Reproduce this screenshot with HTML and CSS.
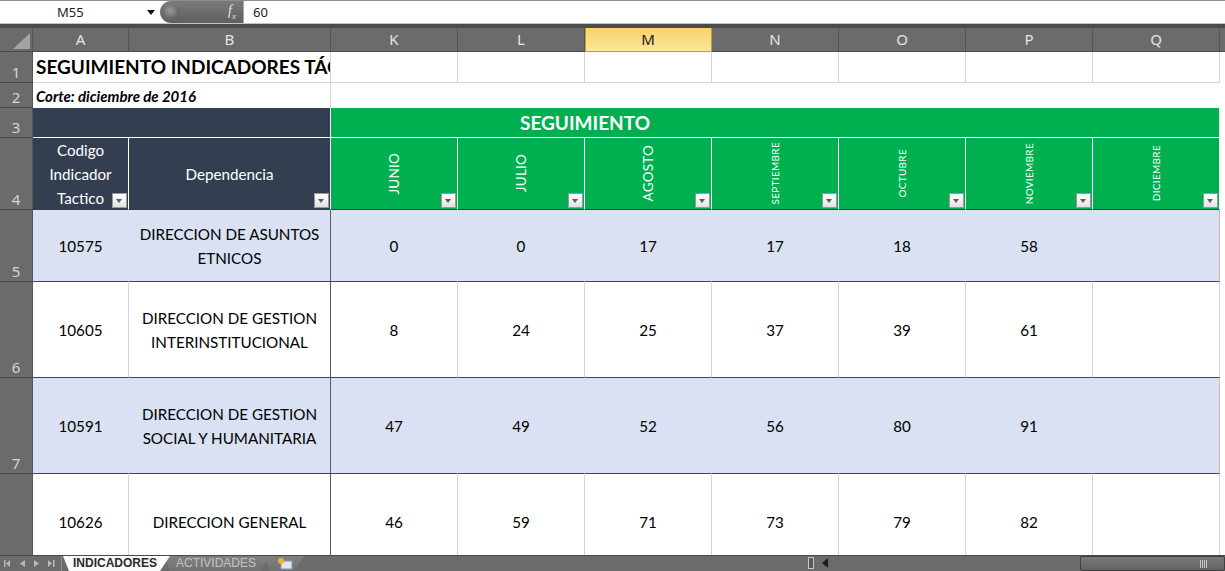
FILE: index.html
```html
<!DOCTYPE html>
<html lang="es">
<head>
<meta charset="UTF-8">
<title>INDICADORES</title>
<link rel="stylesheet" href="styles.css">
</head>
<body>

<div class="formula-bar">
  <div class="name-box">
    <span class="name">M55</span>
    <span class="caret"></span>
  </div>
  <div class="fx-pill">
    <span class="knob"></span>
    <span class="fx">f<sub>x</sub></span>
  </div>
  <div class="formula-input">60</div>
</div>
<div class="band"></div>

<div class="sheet">
  <!-- column headers -->
  <div class="corner">
    <svg width="33" height="24" viewBox="0 0 33 24"><polygon points="30,5 30,21 13,21" fill="#a3a3a3"/></svg>
  </div>
  <div class="ch">A</div>
  <div class="ch">B</div>
  <div class="ch">K</div>
  <div class="ch">L</div>
  <div class="ch sel">M</div>
  <div class="ch">N</div>
  <div class="ch">O</div>
  <div class="ch">P</div>
  <div class="ch">Q</div>
  <div class="ch end"></div>

  <!-- row 1 -->
  <div class="rh">1</div>
  <div class="c title span2">SEGUIMIENTO INDICADORES TÁCTICOS 2016</div>
  <div class="c"></div><div class="c"></div><div class="c"></div><div class="c"></div>
  <div class="c"></div><div class="c"></div><div class="c"></div>

  <!-- row 2 -->
  <div class="rh">2</div>
  <div class="c subtitle span2">Corte: diciembre de 2016</div>
  <div class="c blank span7"></div>

  <!-- row 3 -->
  <div class="rh">3</div>
  <div class="c navy span2"></div>
  <div class="c green group span4">SEGUIMIENTO</div>
  <div class="c green group-end span3"></div>

  <!-- row 4 -->
  <div class="rh">4</div>
  <div class="c navy head">Codigo<br>Indicador<br>Tactico<span class="filter"></span></div>
  <div class="c navy head dark-edge">Dependencia<span class="filter"></span></div>
  <div class="c green head"><span class="month">JUNIO</span><span class="filter"></span></div>
  <div class="c green head"><span class="month">JULIO</span><span class="filter"></span></div>
  <div class="c green head"><span class="month">AGOSTO</span><span class="filter"></span></div>
  <div class="c green head"><span class="month small">SEPTIEMBRE</span><span class="filter"></span></div>
  <div class="c green head"><span class="month small">OCTUBRE</span><span class="filter"></span></div>
  <div class="c green head"><span class="month small">NOVIEMBRE</span><span class="filter"></span></div>
  <div class="c green head"><span class="month small">DICIEMBRE</span><span class="filter"></span></div>

  <!-- row 5 -->
  <div class="rh">5</div>
  <div class="c row shade">10575</div>
  <div class="c row shade dep">DIRECCION DE ASUNTOS<br>ETNICOS</div>
  <div class="c row shade">0</div>
  <div class="c row shade">0</div>
  <div class="c row shade">17</div>
  <div class="c row shade">17</div>
  <div class="c row shade">18</div>
  <div class="c row shade">58</div>
  <div class="c row shade last"></div>

  <!-- row 6 -->
  <div class="rh">6</div>
  <div class="c row">10605</div>
  <div class="c row dep">DIRECCION DE GESTION<br>INTERINSTITUCIONAL</div>
  <div class="c row">8</div>
  <div class="c row">24</div>
  <div class="c row">25</div>
  <div class="c row">37</div>
  <div class="c row">39</div>
  <div class="c row">61</div>
  <div class="c row"></div>

  <!-- row 7 -->
  <div class="rh">7</div>
  <div class="c row shade">10591</div>
  <div class="c row shade dep">DIRECCION DE GESTION<br>SOCIAL Y HUMANITARIA</div>
  <div class="c row shade">47</div>
  <div class="c row shade">49</div>
  <div class="c row shade">52</div>
  <div class="c row shade">56</div>
  <div class="c row shade">80</div>
  <div class="c row shade">91</div>
  <div class="c row shade last"></div>

  <!-- row 8 -->
  <div class="rh">8</div>
  <div class="c row">10626</div>
  <div class="c row dep">DIRECCION GENERAL</div>
  <div class="c row">46</div>
  <div class="c row">59</div>
  <div class="c row">71</div>
  <div class="c row">73</div>
  <div class="c row">79</div>
  <div class="c row">82</div>
  <div class="c row"></div>
</div>

<div class="tabs">
  <div class="nav">
    <svg width="60" height="15" viewBox="0 0 60 15">
      <g fill="#b9b9b9">
        <rect x="4" y="4" width="1.5" height="7"/>
        <polygon points="10,4 10,11 6,7.5"/>
        <polygon points="25,4 25,11 20,7.5"/>
        <polygon points="34,4 34,11 39,7.5"/>
        <polygon points="48,4 48,11 52,7.5"/>
        <rect x="53" y="4" width="1.5" height="7"/>
      </g>
    </svg>
  </div>
  <div class="tab active">INDICADORES</div>
  <div class="tab">ACTIVIDADES</div>
  <div class="tab new">
    <svg width="18" height="13" viewBox="0 0 18 13">
      <rect x="5" y="4" width="11" height="8" fill="#dfe6ee" stroke="#8a9bb0"/>
      <circle cx="5" cy="4" r="3" fill="#f2b233"/>
    </svg>
  </div>
  <div class="spacer"></div>
  <div class="split"></div>
  <div class="scroll-left"></div>
  <div class="track"></div>
  <div class="thumb"><span class="grip"></span></div>
</div>

</body>
</html>
```

FILE: styles.css
```css
* {
  box-sizing: border-box;
}
html, body {
  margin: 0;
  padding: 0;
}
body {
  width: 1225px;
  height: 571px;
  overflow: hidden;
  background-color: #6b6b6b;
  font-family: Lato, "Liberation Sans", sans-serif;
}

/* formula bar */
.formula-bar {
  display: flex;
  height: 24px;
  background-color: #fff;
  border-top: 1px solid #8c8c8c;
  border-bottom: 1px solid #c4c4c4;
  font-family: "Noto Sans", "Liberation Sans", sans-serif;
  font-size: 13px;
  color: #222;
}
.name-box {
  width: 160px;
  display: flex;
  align-items: center;
  padding-left: 57px;
}
.caret {
  margin-left: 63px;
  border-top: 5px solid #111;
  border-left: 4px solid transparent;
  border-right: 4px solid transparent;
}
.fx-pill {
  width: 83px;
  background: linear-gradient(#7a7a7a, #5f5f5f);
  border-radius: 11px 0 0 11px;
  display: flex;
  align-items: center;
  justify-content: space-between;
  padding: 0 7px 0 3px;
}
.knob {
  width: 16px;
  height: 16px;
  border-radius: 50%;
  background: radial-gradient(circle at 45% 40%, #9a9a9a, #6a6a6a 60%, #555);
}
.fx {
  font-family: "Liberation Serif", serif;
  font-style: italic;
  font-size: 14px;
  color: #e0e0e0;
}
.fx sub {
  font-size: 9px;
}
.formula-input {
  flex: 1;
  border-left: 1px solid #a8a8a8;
  padding-left: 9px;
  display: flex;
  align-items: center;
}
.band {
  height: 4px;
  background-color: #4b4b4b;
}

/* grid */
.sheet {
  display: grid;
  grid-template-columns: 33px 96px 202px repeat(7, 127px) 1fr;
  grid-template-rows: 24px 31px 25px 30px 72px 72px 96px 96px 96px;
  height: 527px;
  overflow: hidden;
  background-color: #fff;
}
.corner {
  background-color: #6b6b6b;
  border-right: 1px solid #555;
  border-bottom: 1px solid #4a4a4a;
}
.corner svg {
  display: block;
}
.ch {
  background-color: #6b6b6b;
  color: #e4e4e4;
  font-family: "Noto Sans", "Liberation Sans", sans-serif;
  font-size: 15px;
  line-height: 23px;
  text-align: center;
  border-right: 1px solid #555;
  border-bottom: 1px solid #4a4a4a;
}
.ch.sel {
  background: linear-gradient(#f8d268, #fde79a);
  color: #222;
  border-right-color: #c49c3a;
  border-bottom-color: #c49c3a;
  box-shadow: inset 1px 0 0 #c49c3a;
}
.ch.end {
  border-right: none;
}
.rh {
  grid-column: 1;
  background-color: #6b6b6b;
  color: #d6d6d6;
  font-family: "Noto Sans", "Liberation Sans", sans-serif;
  font-size: 15px;
  display: flex;
  align-items: flex-end;
  justify-content: center;
  line-height: 20px;
  border-right: 1px solid #555;
  border-bottom: 1px solid #4a4a4a;
}

.c {
  position: relative;
  display: flex;
  align-items: center;
  justify-content: center;
  text-align: center;
  font-size: 15.2px;
  line-height: 24px;
  color: #000;
  border-right: 1px solid #d4d4d4;
  border-bottom: 1px solid #d4d4d4;
}
.span2 { grid-column: span 2; }
.span3 { grid-column: span 3; }
.span4 { grid-column: span 4; }
.span7 { grid-column: span 7; }

.title {
  justify-content: flex-start;
  padding-left: 3px;
  font-weight: 700;
  font-size: 19px;
  white-space: nowrap;
  overflow: hidden;
}
.subtitle {
  justify-content: flex-start;
  padding-left: 3px;
  font-weight: 700;
  font-style: italic;
  font-size: 15px;
  border-bottom: none;
}
.blank {
  border-right: none;
  border-bottom: none;
}
.navy {
  background-color: #333f50;
  color: #fff;
  border-right: 1px solid #fff;
  border-bottom: 1px solid #fff;
}
.green {
  background-color: #00b050;
  color: #fff;
  border-right: 1px solid #fff;
  border-bottom: 1px solid #fff;
}
.group {
  font-weight: 700;
  font-size: 19px;
  border-right: none;
}
.group-end {
  border-right: 1px solid #e8e8e8;
}
.head {
  border-bottom: 1px solid #3c3c3c;
}
.month {
  writing-mode: vertical-rl;
  transform: rotate(180deg);
  font-size: 13.5px;
  line-height: 16px;
  letter-spacing: 0.2px;
}
.month.small {
  font-size: 10px;
  letter-spacing: 0.3px;
}
.filter {
  position: absolute;
  right: 1px;
  bottom: 1px;
  width: 15px;
  height: 15px;
  background: linear-gradient(#fff, #e2e2e2);
  border: 1px solid #999;
}
.filter::after {
  content: "";
  position: absolute;
  left: 3px;
  top: 5px;
  border-top: 4px solid #5c5c5c;
  border-left: 3.5px solid transparent;
  border-right: 3.5px solid transparent;
}

/* data rows */
.row {
  border-bottom: 1px solid #3d4858;
}
.row.dep {
  border-right: 1px solid #5a5a5a;
}
.shade {
  background-color: #d9e1f2;
  border-right-color: #d9e1f2;
}
.shade.dep {
  border-right-color: #5a5a5a;
}
.shade.last {
  border-right-color: #c0c0c0;
}

/* sheet tabs + scrollbar */
.tabs {
  display: flex;
  height: 16px;
  background-color: #6b6b6b;
  border-top: 1px solid #4a4a4a;
  font-family: "Liberation Sans", Arial, sans-serif;
  font-size: 12px;
}
.nav {
  width: 62px;
  border-right: 1px solid #8a8a8a;
}
.nav svg {
  display: block;
}
.tab {
  height: 15px;
  line-height: 15px;
  padding: 0 14px 0 12px;
  color: #c3c3c3;
  background: linear-gradient(#808080, #727272);
  clip-path: polygon(0 0, 100% 0, calc(100% - 10px) 100%, 6px 100%);
  margin-left: -6px;
}
.tab.active {
  margin-left: 1px;
  padding: 0 13px 0 10px;
  background: #fafafa;
  color: #2a2a2a;
  font-weight: 700;
  z-index: 1;
}
.tab.new {
  width: 40px;
  padding: 1px 0 0 12px;
}
.tab.new svg {
  display: block;
}
.spacer {
  flex: 1;
}
.split {
  width: 6px;
  height: 12px;
  margin: 1px 8px 0 0;
  border: 1px solid #c8c8c8;
  background-color: #5a5a5a;
}
.scroll-left {
  width: 0;
  height: 0;
  margin: 2px 0 0 0;
  border-top: 5px solid transparent;
  border-bottom: 5px solid transparent;
  border-right: 6px solid #1e1e1e;
}
.track {
  width: 252px;
}
.thumb {
  width: 145px;
  border: 1px solid #3e3e3e;
  border-radius: 2px;
  background: linear-gradient(#7a7a7a, #626262);
  display: flex;
  justify-content: flex-end;
  align-items: center;
  padding-right: 16px;
}
.grip {
  width: 8px;
  height: 8px;
  background: repeating-linear-gradient(90deg, #c8c8c8 0 1px, transparent 1px 2px);
}
```
